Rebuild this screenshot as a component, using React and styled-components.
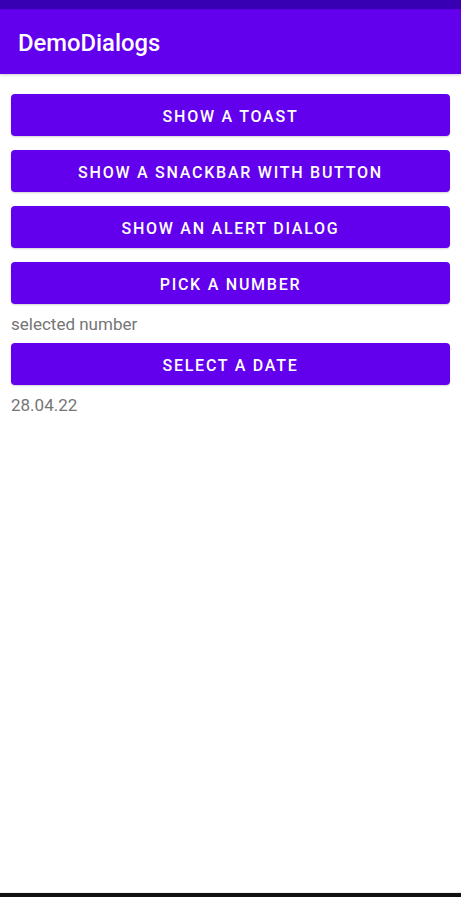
import React from 'react'
import styled, { createGlobalStyle } from 'styled-components'

const GlobalStyle = createGlobalStyle`
  html, body {
    margin: 0;
    padding: 0;
    background: #ffffff;
  }
  body {
    font-family: Roboto, "Noto Sans", sans-serif;
  }
`

function App() {
  return (
    <Screen>
      <GlobalStyle />
      <StatusBar />
      <AppBar>
        <Title>DemoDialogs</Title>
      </AppBar>
      <Content>
        <Button>Show a toast</Button>
        <Button>Show a snackbar with button</Button>
        <Button>Show an alert dialog</Button>
        <Button>Pick a number</Button>
        <Label>selected number</Label>
        <Button>Select a date</Button>
        <Label>28.04.22</Label>
      </Content>
      <NavBar />
    </Screen>
  )
}

export default App

const Screen = styled.div`
  width: 461px;
  height: 897px;
  display: flex;
  flex-direction: column;
  background: #ffffff;
  overflow: hidden;
`

const StatusBar = styled.div`
  height: 9px;
  background: #3700b3;
  flex-shrink: 0;
`

const AppBar = styled.div`
  height: 65px;
  background: #6200ee;
  display: flex;
  align-items: center;
  padding: 0 18px;
  flex-shrink: 0;
  box-shadow: 0 1px 3px rgba(0, 0, 0, 0.2);
`

const Title = styled.h1`
  margin: 0;
  padding-top: 2px;
  color: #ffffff;
  font-size: 23.8px;
  font-weight: 500;
`

const Content = styled.div`
  flex: 1;
  display: flex;
  flex-direction: column;
  padding: 20px 11px 0;
`

const Button = styled.button`
  height: 42px;
  margin-bottom: 14px;
  padding: 2px 0 0;
  border: none;
  border-radius: 4px;
  background: #6200ee;
  color: #ffffff;
  font-family: Roboto, sans-serif;
  font-size: 16px;
  font-weight: 500;
  letter-spacing: 1.75px;
  text-transform: uppercase;
  box-shadow: 0 1px 2px rgba(0, 0, 0, 0.18);
  cursor: pointer;

  & + div {
    margin-top: -4px;
  }
`

const Label = styled.div`
  color: #757575;
  font-size: 17px;
  line-height: 20px;
  height: 20px;
  margin-bottom: 9px;
`

const NavBar = styled.div`
  height: 4px;
  background: #111111;
  border-top: 1px solid #f0f0f0;
  flex-shrink: 0;
`
